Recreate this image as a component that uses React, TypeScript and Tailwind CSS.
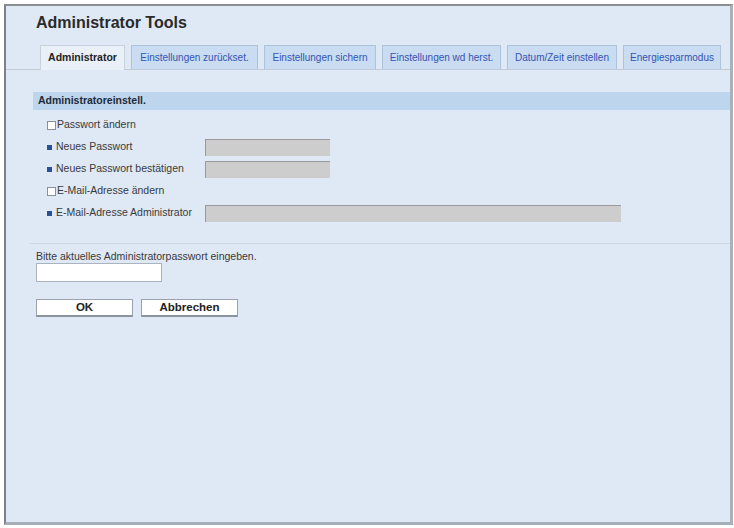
import React from "react";

const tabs = [
  "Einstellungen zurückset.",
  "Einstellungen sichern",
  "Einstellungen wd herst.",
  "Datum/Zeit einstellen",
  "Energiesparmodus",
];

function Bullet() {
  return <span className="inline-block w-[5px] h-[5px] bg-[#2c4f9a] mr-[4px]" />;
}

function Check() {
  return <span className="inline-block w-[9px] h-[9px] bg-white border border-[#8a9099] mr-[1px]" />;
}

export default function App() {
  return (
    <div className="w-[734px] h-[528px] bg-white overflow-hidden" style={{ fontFamily: '"Liberation Sans", Arial, sans-serif' }}>
      <div className="ml-[4px] mt-[4px] w-[729px] h-[521px] bg-[#dee9f5] border-l-2 border-t-2 border-r-[3px] border-b-[3px] border-l-[#7d8288] border-t-[#8a8f95] border-r-[#a9b1ba] border-b-[#a6aeb7] flex flex-col">
        <div className="pl-[30px] pt-[8px] text-[16px] font-bold text-[#2a2a2a] leading-[18px]">Administrator Tools</div>
        <div className="pl-[30px] pr-[4px] mt-[13px] flex items-end border-b border-[#c3ccd6]">
          <div className="ml-[4px] w-[85px] h-[25px] flex items-center justify-center bg-[#e9f0f8] border border-b-0 border-[#c9d2dc] text-[10.5px] font-bold text-[#222] -mb-px">
            Administrator
          </div>
          {tabs.map((t, i) => (
            <div
              key={t}
              className={
                "ml-[6px] h-[24px] flex items-center justify-center bg-[#c9dcf1] border border-[#adc3dc] border-b-0 text-[10px] text-[#3454b4] " +
                (i === 0 ? "w-[127px]" : i === 1 ? "w-[112px]" : i === 2 ? "w-[119px]" : i === 3 ? "w-[110px]" : "w-[98px]")
              }
            >
              {t}
            </div>
          ))}
        </div>
        <div className="ml-[27px] mt-[22px] h-[18px] bg-[#bdd6ee] flex items-center pl-[5px] text-[10.5px] font-bold text-[#1e2a3a]">
          Administratoreinstell.
        </div>
        <div className="pl-[41px] text-[10.5px] text-[#3a3a3a]">
          <div className="h-[22px] mt-[4px] flex items-center"><Check />Passwort ändern</div>
          <div className="h-[22px] flex items-center">
            <div className="w-[158px] flex items-center"><Bullet />Neues Passwort</div>
            <div className="w-[125px] h-[17px] bg-[#cdcdcd] border-t border-l border-[#9a9a9a]" />
          </div>
          <div className="h-[22px] flex items-center">
            <div className="w-[158px] flex items-center"><Bullet />Neues Passwort bestätigen</div>
            <div className="w-[125px] h-[17px] bg-[#cdcdcd] border-t border-l border-[#9a9a9a]" />
          </div>
          <div className="h-[22px] flex items-center"><Check />E-Mail-Adresse ändern</div>
          <div className="h-[22px] flex items-center">
            <div className="w-[158px] flex items-center"><Bullet />E-Mail-Adresse Administrator</div>
            <div className="w-[416px] h-[17px] bg-[#cdcdcd] border-t border-l border-[#9a9a9a]" />
          </div>
        </div>
        <div className="ml-[24px] mt-[19px] border-t border-[#cdd6e0]" />
        <div className="pl-[30px] mt-[6px] text-[10.5px] text-[#3a3a3a] leading-[12px]">Bitte aktuelles Administratorpasswort eingeben.</div>
        <div className="ml-[30px] mt-[1px] w-[126px] h-[19px] bg-white border border-[#aab4c0]" />
        <div className="pl-[30px] mt-[17px] flex gap-[8px]">
          <div className="w-[97px] h-[18px] bg-white border border-[#9aa3ad] border-b-2 border-b-[#8b939c] flex items-center justify-center text-[11.5px] font-bold text-[#222]">OK</div>
          <div className="w-[97px] h-[18px] bg-white border border-[#9aa3ad] border-b-2 border-b-[#8b939c] flex items-center justify-center text-[11.5px] font-bold text-[#222]">Abbrechen</div>
        </div>
      </div>
    </div>
  );
}
